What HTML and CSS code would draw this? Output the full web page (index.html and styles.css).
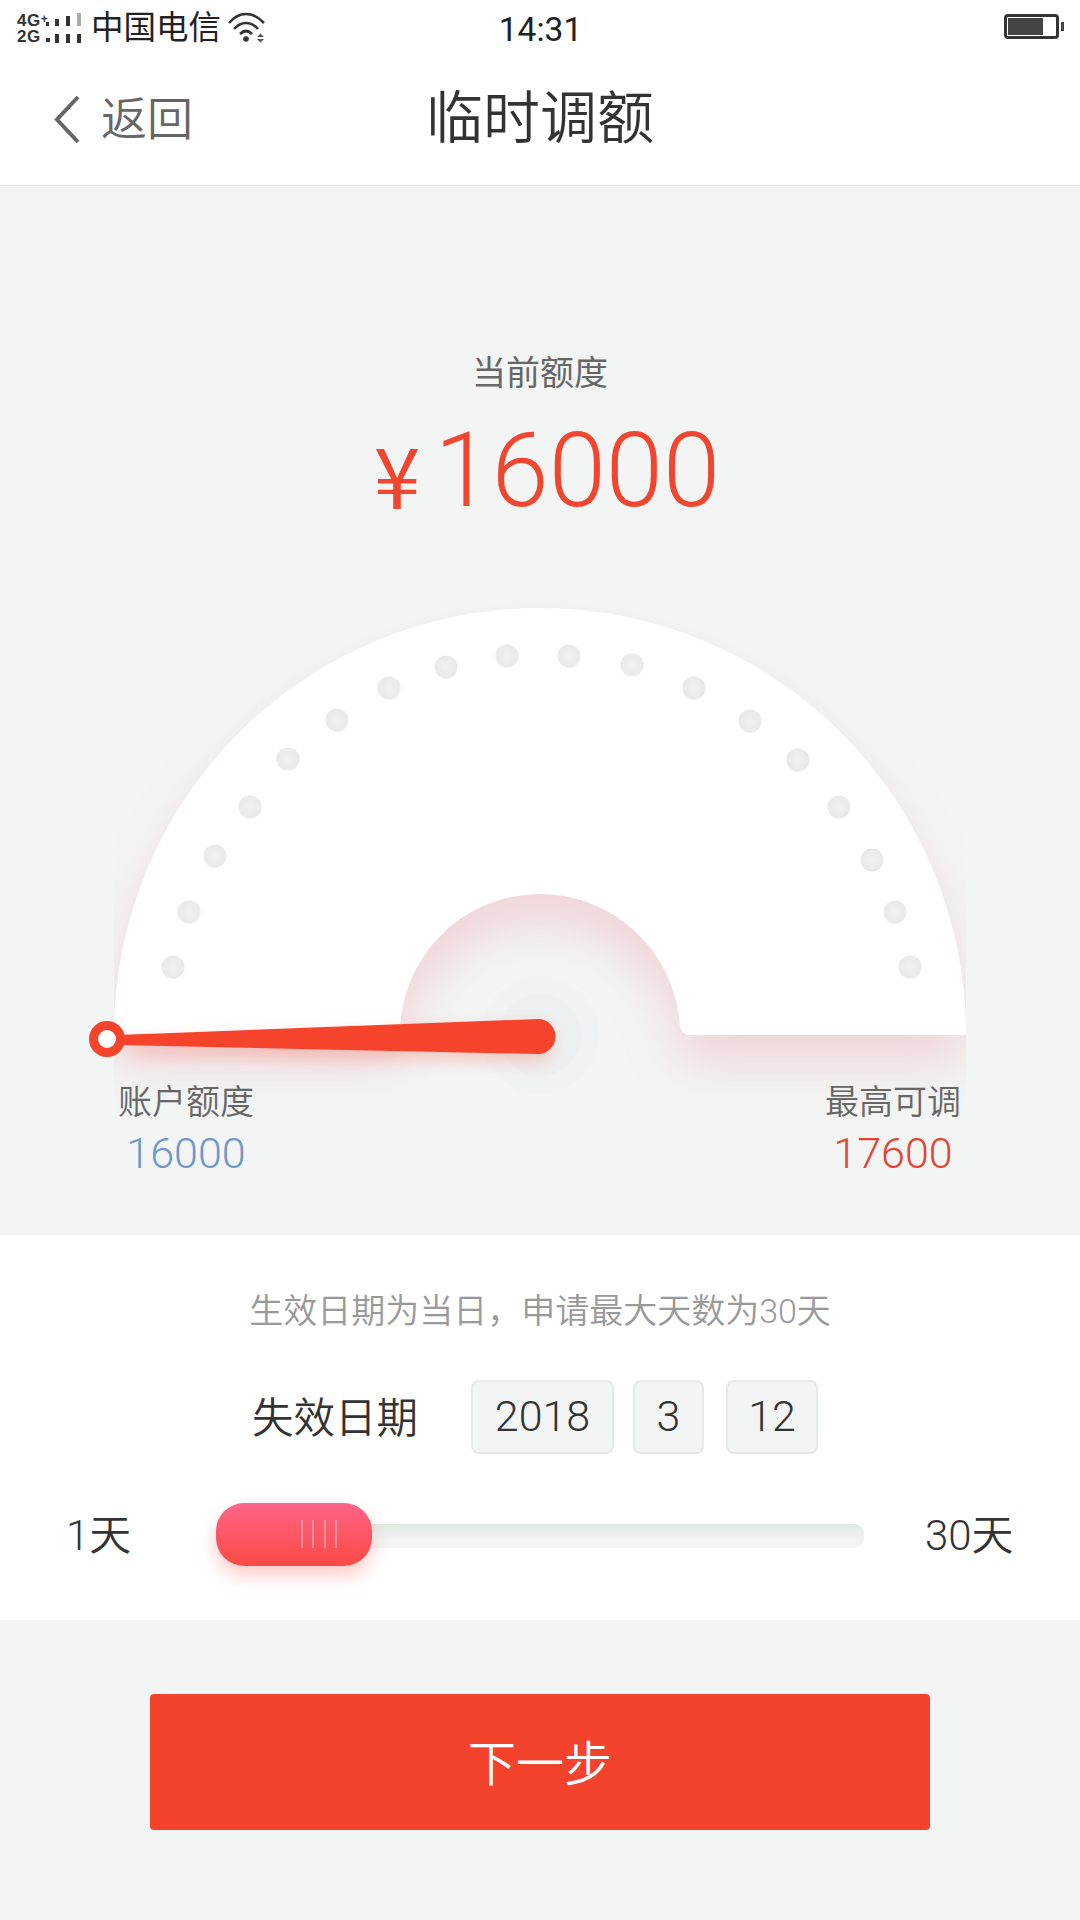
FILE: index.html
```html
<!DOCTYPE html>
<html lang="zh-CN">
<head>
    <meta charset="UTF-8">
    <meta name="viewport" content="width=device-width, initial-scale=1.0">
    <title>临时调额</title>
    <link rel="stylesheet" href="styles.css">
</head>
<body>
    <div class="status-bar">
        <div class="status-left">
            <div class="net-type"><span>4G<i>+</i></span><span>2G</span></div>
            <svg class="signal" width="36" height="32" viewBox="46 11 36 32">
                <rect x="46" y="21" width="3" height="4" fill="#333"/>
                <rect x="46" y="37" width="4" height="4" fill="#333"/>
                <rect x="55" y="18" width="4" height="7" fill="#333"/>
                <rect x="55" y="33" width="4" height="9" fill="#333"/>
                <rect x="66" y="15" width="4" height="10" fill="#333"/>
                <rect x="66" y="33" width="4" height="9" fill="#333"/>
                <rect x="77" y="12" width="4" height="13" fill="#aaa"/>
                <rect x="77" y="33" width="4" height="9" fill="#333"/>
            </svg>
            <span class="carrier">中国电信</span>
            <svg class="wifi" width="38" height="32" viewBox="227 11 38 32">
                <path d="M228 22C238 10 252 10 263 22" fill="none" stroke="#333" stroke-width="2.6"/>
                <path d="M233 28C240 20 250 20 257 28" fill="none" stroke="#333" stroke-width="2.6"/>
                <path d="M239 33C243 29 247 29 251 33" fill="none" stroke="#333" stroke-width="2.6"/>
                <circle cx="245" cy="38" r="2.8" fill="#333"/>
                <path d="M256 36H263L259.500 32.500ZM256 38H263L259.500 41.500Z" fill="#555"/>
            </svg>
        </div>
        <div class="clock">14:31</div>
        <div class="status-right">
            <div class="battery"><div class="battery-fill"></div></div>
            <div class="battery-nub"></div>
        </div>
    </div>

    <div class="nav">
        <div class="nav-back">
            <svg width="27" height="49" viewBox="0 0 27 49">
                <path d="M24 2L3 24.500L24 47" fill="none" stroke="#666" stroke-width="4"/>
            </svg>
            <span>返回</span>
        </div>
        <div class="nav-title">临时调额</div>
    </div>

    <div class="credit">
        <div class="credit-label">当前额度</div>
        <div class="credit-amount"><span class="yen">¥</span><span class="amount-num">16000</span></div>

        <svg class="gauge" width="1080" height="530" viewBox="0 590 1080 530">
            <defs>
                <filter id="fanBlur" x="-20%" y="-20%" width="140%" height="140%">
                    <feGaussianBlur stdDeviation="25"/>
                </filter>
                <filter id="needleBlur" x="-10%" y="-200%" width="120%" height="500%">
                    <feGaussianBlur stdDeviation="9"/>
                </filter>
                <clipPath id="fanClip">
                    <rect x="114" y="590" width="852" height="530"/>
                </clipPath>
                <radialGradient id="dotFill">
                    <stop offset="0" stop-color="#f1f1f1"/>
                    <stop offset="1" stop-color="#e9e9e9"/>
                </radialGradient>
            </defs>

            <g clip-path="url(#fanClip)">
                <path class="fan-shadow" filter="url(#fanBlur)" transform="translate(0 28)"
                      d="M114 1034A426 426 0 0 1 966 1034L966 1035L680 1035A140 140 0 0 0 400 1035L114 1035Z"/>
            </g>
            <path class="fan" d="M114 1034A426 426 0 0 1 966 1034Q966 1035 958 1035L690 1035Q682 1035 679.770 1026A140 140 0 0 0 540 894A140 140 0 0 0 400 1034L114 1034Z"/>

            <g class="dots">
                <circle cx="173" cy="967" r="11.500"/>
                <circle cx="189" cy="912" r="11.500"/>
                <circle cx="215" cy="856" r="11.500"/>
                <circle cx="250" cy="807" r="11.500"/>
                <circle cx="288" cy="759" r="11.500"/>
                <circle cx="337" cy="720" r="11.500"/>
                <circle cx="389" cy="688" r="11.500"/>
                <circle cx="446" cy="667" r="11.500"/>
                <circle cx="507" cy="656" r="11.500"/>
                <circle cx="569" cy="656" r="11.500"/>
                <circle cx="632" cy="665" r="11.500"/>
                <circle cx="694" cy="688" r="11.500"/>
                <circle cx="750" cy="721" r="11.500"/>
                <circle cx="798" cy="760" r="11.500"/>
                <circle cx="839" cy="807" r="11.500"/>
                <circle cx="872" cy="860" r="11.500"/>
                <circle cx="895" cy="912" r="11.500"/>
                <circle cx="910" cy="967" r="11.500"/>
            </g>

            <circle class="ring-outer" cx="540" cy="1035" r="59"/>
            <circle class="ring-inner" cx="540" cy="1035" r="41"/>

            <path class="needle-glow" filter="url(#needleBlur)" transform="translate(0 8)"
                  d="M125 1035L538 1019A18 18 0 0 1 538 1054L125 1045Z"/>
            <path class="needle" d="M120 1035L538 1019A17.500 17.500 0 0 1 538 1054L120 1045Z"/>
            <circle class="needle-tip" cx="107" cy="1039" r="13.500"/>
        </svg>

        <div class="limits">
            <div class="limit">
                <div class="limit-name">账户额度</div>
                <div class="limit-value blue">16000</div>
            </div>
            <div class="limit">
                <div class="limit-name">最高可调</div>
                <div class="limit-value red">17600</div>
            </div>
        </div>
    </div>

    <div class="form">
        <div class="form-hint">生效日期为当日，申请最大天数为30天</div>
        <div class="date-row">
            <div class="date-label">失效日期</div>
            <div class="date-box year">2018</div>
            <div class="date-box month">3</div>
            <div class="date-box day">12</div>
        </div>
        <div class="slider-row">
            <div class="slider-min">1天</div>
            <div class="slider">
                <div class="slider-thumb">
                    <div class="grip"></div>
                    <div class="grip"></div>
                    <div class="grip"></div>
                    <div class="grip"></div>
                </div>
            </div>
            <div class="slider-max">30天</div>
        </div>
    </div>

    <div class="footer">
        <button class="next-btn">下一步</button>
    </div>
</body>
</html>
```
FILE: styles.css
```css
* {
    box-sizing: border-box;
}

body {
    margin: 0;
    width: 1080px;
    height: 1920px;
    overflow: hidden;
    background: #f2f5f4;
    color: #333;
    font-family: Roboto, "Noto Sans CJK SC", sans-serif;
}

.status-bar {
    height: 56px;
    background: #fff;
    display: grid;
    grid-template-columns: 1fr auto 1fr;
    align-items: center;
    padding: 0 16px 0 17px;
}

.status-left {
    display: flex;
    align-items: center;
}

.net-type {
    width: 29px;
    display: flex;
    flex-direction: column;
    font-family: "Liberation Sans", sans-serif;
    font-size: 17px;
    font-weight: bold;
    line-height: 16px;
    letter-spacing: 0.5px;
    white-space: nowrap;
}

.net-type i {
    font-style: normal;
    font-size: 12px;
    vertical-align: 3px;
}

.signal {
    margin-right: 9px;
}

.carrier {
    font-size: 32.500px;
    line-height: 56px;
    color: #222;
    margin-right: 7px;
}

.clock {
    font-size: 33.500px;
    color: #222;
    margin-top: 2px;
}

.status-right {
    display: flex;
    align-items: center;
    justify-content: flex-end;
    gap: 2px;
}

.battery {
    width: 55px;
    height: 25px;
    border: 3px solid #333;
    border-radius: 4px;
    padding: 1px;
    margin-top: -4px;
}

.battery-fill {
    width: 35px;
    height: 100%;
    background: #444;
}

.battery-nub {
    width: 3px;
    height: 9px;
    background: #444;
    margin-top: -4px;
}

.nav {
    height: 130px;
    background: #fff;
    border-bottom: 1px solid #e2e7e6;
    display: grid;
    grid-template-columns: 1fr auto 1fr;
    align-items: center;
    padding: 0 0 3px 54px;
}

.nav-back {
    display: flex;
    align-items: center;
    gap: 20px;
    color: #666;
    font-size: 46px;
    font-weight: 350;
    line-height: 60px;
}

.nav-title {
    font-size: 57px;
    font-weight: 350;
    line-height: 70px;
    color: #333;
    margin-left: -54px;
}

.credit {
    height: 1049px;
    padding-top: 164px;
    display: flex;
    flex-direction: column;
    align-items: center;
}

.credit-label {
    font-size: 34px;
    line-height: 46px;
    color: #666;
}

.credit-amount {
    margin-top: 14px;
    height: 120px;
    padding-left: 14px;
    display: flex;
    align-items: center;
    gap: 14px;
    font-size: 103px;
    font-weight: 300;
    line-height: 120px;
    color: #f0452f;
}

.amount-num {
    margin-top: 2px;
}

.yen {
    font-family: "Noto Sans CJK SC", sans-serif;
    font-size: 84px;
    font-weight: 400;
    line-height: 120px;
    margin-top: 6px;
}

.gauge {
    display: block;
    margin-top: 60px;
    flex: none;
}

.fan-shadow {
    fill: #f0a8b0;
    opacity: 0.42;
}

.fan {
    fill: #fff;
}

.dots circle {
    fill: url(#dotFill);
}

.ring-outer {
    fill: #f0f3f3;
}

.ring-inner {
    fill: #edf0f0;
}

.needle {
    fill: #f5432c;
}

.needle-glow {
    fill: #f5432c;
    opacity: 0.25;
}

.needle-tip {
    fill: #fff;
    stroke: #f5432c;
    stroke-width: 9;
}

.limits {
    width: 100%;
    margin-top: -41px;
    padding: 0 119px 0 118px;
    display: flex;
    justify-content: space-between;
    position: relative;
}

.limit {
    text-align: center;
}

.limit-name {
    font-size: 34px;
    font-weight: 350;
    line-height: 46px;
    color: #666;
}

.limit-value {
    margin-top: 2px;
    font-size: 43px;
    font-weight: 300;
    line-height: 52px;
}

.blue {
    color: #6f96c8;
}

.red {
    color: #e5432f;
}

.form {
    height: 385px;
    background: #fff;
    padding-top: 54px;
}

.form-hint {
    font-size: 34px;
    font-weight: 350;
    line-height: 44px;
    text-align: center;
    color: #999;
}

.date-row {
    margin-top: 47px;
    padding-left: 252px;
    display: flex;
    align-items: center;
}

.date-label {
    width: 219px;
    margin-top: -5px;
    font-size: 41.500px;
    font-weight: 350;
    color: #333;
}

.date-box {
    height: 74px;
    background: #f2f5f4;
    border: 2.500px solid #e4eaea;
    border-radius: 8px;
    font-size: 43px;
    font-weight: 300;
    line-height: 69px;
    text-align: center;
}

.year {
    width: 143px;
}

.month {
    width: 71px;
    margin-left: 19px;
}

.day {
    width: 92px;
    margin-left: 22px;
}

.slider-row {
    margin-top: 52px;
    padding-left: 66px;
    display: flex;
    align-items: center;
    font-size: 42px;
    font-weight: 350;
}

.slider-min {
    width: 150px;
    margin-top: -5px;
}

.slider {
    width: 648px;
    height: 24px;
    margin-top: 3px;
    border-radius: 10px;
    background: linear-gradient(#e1e9e2, #f2f5f4 70%);
    display: flex;
    align-items: center;
}

.slider-thumb {
    width: 156px;
    height: 63px;
    flex: none;
    margin-top: -3px;
    border-radius: 28px;
    background: linear-gradient(#ff6488, #fb4a45);
    box-shadow: 0 10px 18px rgba(251, 74, 69, 0.28);
    display: flex;
    justify-content: flex-end;
    align-items: center;
    gap: 9.500px;
    padding-right: 35px;
}

.grip {
    width: 2px;
    height: 28px;
    background: rgba(255, 255, 255, 0.35);
}

.slider-max {
    margin-left: 61px;
    margin-top: -5px;
}

.footer {
    padding-top: 74px;
    display: flex;
    justify-content: center;
}

.next-btn {
    width: 780px;
    height: 136px;
    padding: 0 0 4px;
    border: none;
    border-radius: 4px;
    background: #f4432c;
    color: #fff;
    font-family: inherit;
    font-size: 48px;
    font-weight: 350;
}
```
